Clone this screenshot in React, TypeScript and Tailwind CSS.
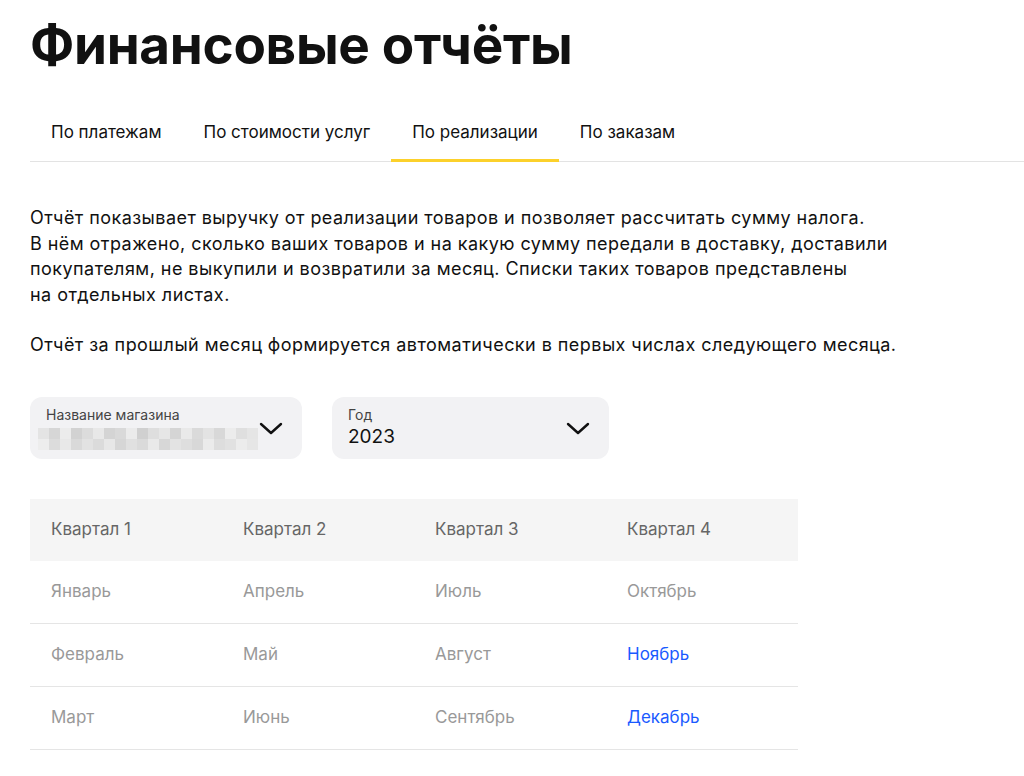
import React from 'react';

const tabs = ['По платежам', 'По стоимости услуг', 'По реализации', 'По заказам'];
const quarters = [
  ['Январь', 'Февраль', 'Март'],
  ['Апрель', 'Май', 'Июнь'],
  ['Июль', 'Август', 'Сентябрь'],
  ['Октябрь', 'Ноябрь', 'Декабрь'],
];
const links = ['Ноябрь', 'Декабрь'];
const pix = [
  ['#e4e4e4', '#d6d6d6', '#ececec', '#d2d2d2', '#dcdcdc', '#e8e8e8', '#d4d4d4', '#d9d9d9', '#ebebeb', '#d0d0d0', '#dedede', '#e6e6e6', '#d5d5d5', '#e9e9e9', '#dadada', '#e3e3e3', '#d8d8d8', '#ececec', '#dfdfdf', '#e5e5e5'],
  ['#ededed', '#dcdcdc', '#e8e8e8', '#d9d9d9', '#e2e2e2', '#dbdbdb', '#e7e7e7', '#d6d6d6', '#e0e0e0', '#dadada', '#e9e9e9', '#d7d7d7', '#e3e3e3', '#dedede', '#d8d8d8', '#ebebeb', '#dddddd', '#e1e1e1', '#ececec', '#e6e6e6'],
];

const Chevron = () => (
  <svg className="shrink-0" width="26" height="16" viewBox="0 0 26 16" fill="none" stroke="#111" strokeWidth="2.4" strokeLinecap="round" strokeLinejoin="round">
    <path d="M3 4l10 9 10-9" />
  </svg>
);

export default function App() {
  return (
    <div className="min-h-screen bg-white pl-[30px] text-[#111]" style={{ fontFamily: 'Inter, "Noto Sans", sans-serif' }}>
      <h1 className="pt-[14px] text-[53px] font-bold leading-[62px] tracking-[-0.3px]">Финансовые отчёты</h1>
      <div className="mt-[44px] flex border-b border-[#e3e3e3]">
        {tabs.map((t, i) => (
          <div key={t} className={`px-[21px] pb-[15px] text-[17px] leading-[24px] border-b-[3px] -mb-px ${i === 2 ? 'border-[#fcd12b]' : 'border-transparent'}`}>{t}</div>
        ))}
      </div>
      <div className="mt-[43px] text-[18px] leading-[25.5px] tracking-[0.45px] text-[#111]">
        <p>Отчёт показывает выручку от реализации товаров и позволяет рассчитать сумму налога.<br />В нём отражено, сколько ваших товаров и на какую сумму передали в доставку, доставили<br />покупателям, не выкупили и возвратили за месяц. Списки таких товаров представлены<br />на отдельных листах.</p>
        <p className="mt-[25px]">Отчёт за прошлый месяц формируется автоматически в первых числах следующего месяца.</p>
      </div>
      <div className="mt-[39px] flex gap-[30px]">
        <div className="flex h-[62px] w-[272px] items-center justify-between rounded-[12px] bg-[#f2f2f4] pl-[16px] pr-[18px]">
          <div>
            <div className="text-[14px] leading-[18px] text-[#444]">Название магазина</div>
            <div className="mt-[4px] -ml-[8px] flex flex-col">
              {pix.map((row, r) => (
                <div key={r} className="flex">
                  {row.map((c, k) => <div key={k} className="h-[11px] w-[11px]" style={{ background: c }} />)}
                </div>
              ))}
            </div>
          </div>
          <Chevron />
        </div>
        <div className="flex h-[62px] w-[277px] items-center justify-between rounded-[12px] bg-[#f2f2f4] pl-[16px] pr-[18px]">
          <div>
            <div className="text-[14px] leading-[18px] text-[#444]">Год</div>
            <div className="text-[19px] leading-[26px]">2023</div>
          </div>
          <Chevron />
        </div>
      </div>
      <div className="mt-[40px] w-[768px]">
        <div className="grid h-[62px] grid-cols-4 items-center bg-[#f5f5f5] text-[17px] text-[#666]">
          {['Квартал 1', 'Квартал 2', 'Квартал 3', 'Квартал 4'].map(q => <div key={q} className="pl-[21px]">{q}</div>)}
        </div>
        {[0, 1, 2].map(r => (
          <div key={r} className="grid h-[63px] grid-cols-4 items-center border-b border-[#e5e5e5] text-[17px]">
            {quarters.map((q, c) => (
              <div key={c} className={`pl-[21px] ${links.includes(q[r]) ? 'text-[#1a5aff]' : 'text-[#999]'}`}>{q[r]}</div>
            ))}
          </div>
        ))}
      </div>
    </div>
  );
}
